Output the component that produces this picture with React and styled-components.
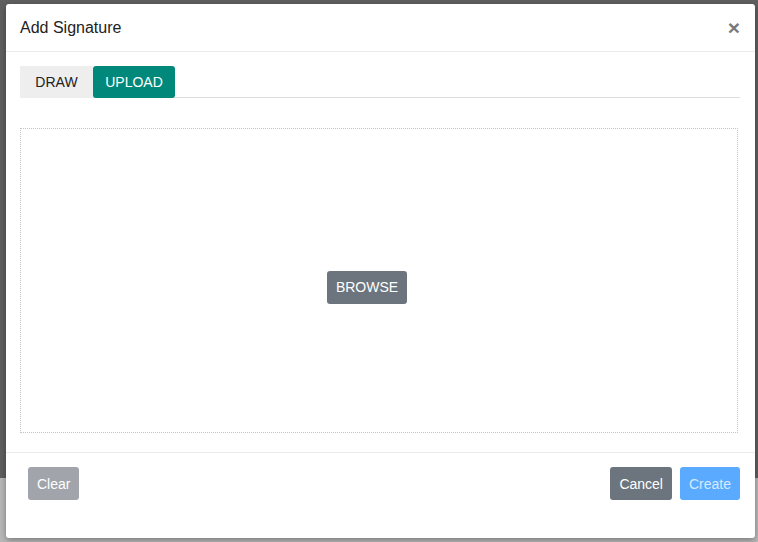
import React, { useState } from "react";
import styled, { createGlobalStyle } from "styled-components";

const GlobalStyle = createGlobalStyle`
  html, body {
    margin: 0;
    padding: 0;
    height: 100%;
    font-family: "Liberation Sans", Arial, sans-serif;
  }
  #root {
    height: 100%;
  }
`;

const Backdrop = styled.div`
  height: 542px;
  box-sizing: border-box;
  padding: 4px 3px 4px 6px;
  background: linear-gradient(to bottom, #5f5f5f 0, #5f5f5f 478px, #b8b8b8 478px);
  display: flex;
`;

const Modal = styled.div`
  flex: 1;
  background: #fff;
  border-radius: 3px;
  box-shadow: 0 2px 6px rgba(0, 0, 0, 0.35);
  display: flex;
  flex-direction: column;
`;

const Header = styled.div`
  height: 48px;
  box-sizing: border-box;
  padding: 0 15px 0 14px;
  border-bottom: 1px solid #e9ecef;
  display: flex;
  align-items: center;
  justify-content: space-between;
`;

const Title = styled.h5`
  margin: 0;
  font-size: 16px;
  font-weight: normal;
  color: #222;
`;

const Close = styled.button`
  border: 0;
  background: none;
  padding: 0;
  font-family: "Liberation Sans", Arial, sans-serif;
  font-size: 21px;
  font-weight: bold;
  color: #7a7a7a;
  line-height: 1;
  cursor: pointer;
`;

const Body = styled.div`
  flex: 1;
  padding: 14px 14px 19px 14px;
  display: flex;
  flex-direction: column;
`;

const Tabs = styled.div`
  display: flex;
  border-bottom: 1px solid #dcdcdc;
  height: 31px;
  margin-right: 1px;
`;

const Tab = styled.button`
  border: 0;
  height: 32px;
  width: ${(p) => p.$w}px;
  border-radius: ${(p) => (p.$active ? "3px" : "0")};
  background: ${(p) => (p.$active ? "#00897b" : "#eeeeee")};
  color: ${(p) => (p.$active ? "#fff" : "#222")};
  font-family: "Liberation Sans", Arial, sans-serif;
  font-size: 14px;
  text-transform: uppercase;
  cursor: pointer;
  padding: 0;
`;

const DropZone = styled.div`
  margin-top: 30px;
  margin-right: 3px;
  flex: 1;
  box-sizing: border-box;
  padding: 13px 24px 0 0;
  border: 1px dotted #c4c4c4;
  display: flex;
  align-items: center;
  justify-content: center;
`;

const Button = styled.button`
  border: 0;
  border-radius: 3px;
  height: 33px;
  padding: 0 9px;
  font-family: "Liberation Sans", Arial, sans-serif;
  font-size: 14px;
  background: ${(p) => p.$bg};
  color: ${(p) => p.$color || "#fff"};
  cursor: ${(p) => (p.disabled ? "default" : "pointer")};
`;

const Footer = styled.div`
  border-top: 1px solid #e9ecef;
  padding: 14px 15px 38px 22px;
  display: flex;
  align-items: center;
`;

const Spacer = styled.div`
  flex: 1;
`;

const Actions = styled.div`
  display: flex;
  gap: 8px;
`;

export default function App() {
  const [tab, setTab] = useState("upload");

  return (
    <>
      <GlobalStyle />
      <Backdrop>
        <Modal>
          <Header>
            <Title>Add Signature</Title>
            <Close aria-label="Close">×</Close>
          </Header>
          <Body>
            <Tabs>
              <Tab $w={73} $active={tab === "draw"} onClick={() => setTab("draw")}>
                Draw
              </Tab>
              <Tab $w={82} $active={tab === "upload"} onClick={() => setTab("upload")}>
                Upload
              </Tab>
            </Tabs>
            <DropZone>
              <Button $bg="#6c757d">BROWSE</Button>
            </DropZone>
          </Body>
          <Footer>
            <Button $bg="#a1a5ab" disabled>
              Clear
            </Button>
            <Spacer />
            <Actions>
              <Button $bg="#6c757d">Cancel</Button>
              <Button $bg="#5aabff" $color="#d6e9ff" disabled>
                Create
              </Button>
            </Actions>
          </Footer>
        </Modal>
      </Backdrop>
    </>
  );
}
